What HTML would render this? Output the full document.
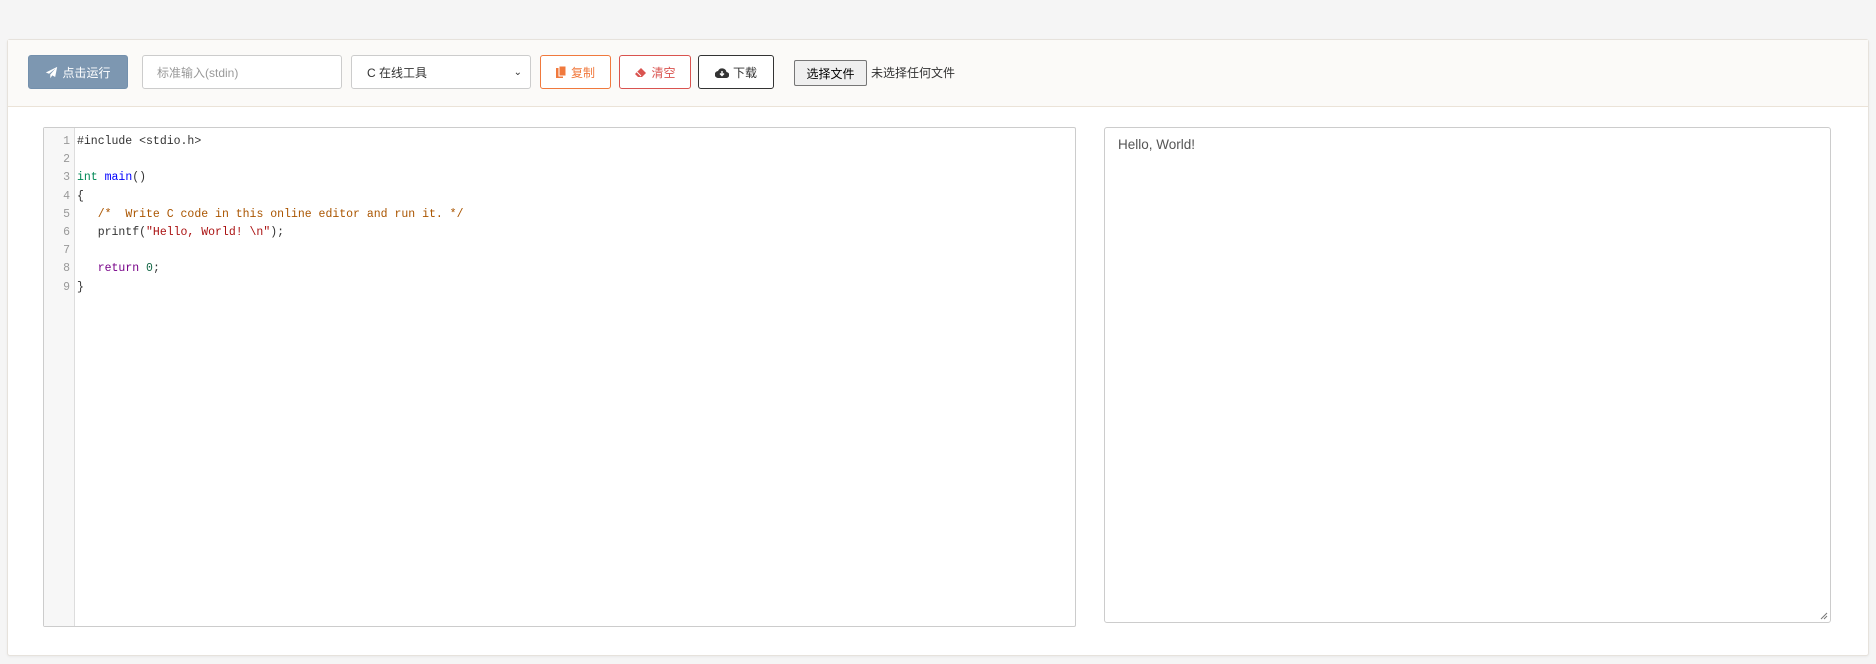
<!DOCTYPE html>
<html><head><meta charset="utf-8"><style>
body{margin:0;width:1876px;height:664px;background:#f5f5f5;font-family:"Liberation Sans","Noto Sans CJK SC",sans-serif;position:relative;overflow:hidden}
.panel{position:absolute;left:7px;top:39px;width:1860px;height:615px;background:#fff;border:1px solid #e6e2dc;border-radius:3px;box-shadow:0 1px 2px rgba(0,0,0,.05)}
.bar{position:absolute;left:0;top:0;width:1860px;height:66px;background:#fbfaf8;border-bottom:1px solid #ebe3d8}
.b{position:absolute;top:15px;height:34px;box-sizing:border-box;border-radius:3px;font-size:12px;display:flex;align-items:center;justify-content:center;gap:4px}
.code{position:absolute;left:35px;top:87px;width:1031px;height:498px;border:1px solid #ccc;border-radius:2px;background:#fff}
.gut{position:absolute;left:0;top:0;width:30px;height:100%;background:#f7f7f7;border-right:1px solid #ddd}
.ln,.cl{position:absolute;font-family:"Liberation Mono","Noto Serif CJK SC",monospace;font-size:11.5px;line-height:18.2px;top:5px;white-space:pre}
.ln{right:0;width:26px;text-align:right;color:#999;left:0}
.cl{left:33px;color:#333}
.out{position:absolute;left:1096px;top:87px;width:725px;height:494px;border:1px solid #ccc;border-radius:3px}
</style></head><body>
<div class="panel">
<div class="bar">
<div class="b" style="left:20px;width:100px;background:#7d97b1;color:#fff;border:1px solid #7390ad"><svg width="13" height="13" viewBox="0 0 16 16"><path d="M15 1L1 8l4 1.5L13 3 6.5 10.5V15l2.5-3.5 3.5 2z" fill="#fff"/></svg>点击运行</div>
<div class="b" style="left:134px;width:200px;border:1px solid #ccc;background:#fff;color:#999;justify-content:flex-start;padding-left:14px">标准输入(stdin)</div>
<div class="b" style="left:343px;width:180px;border:1px solid #ccc;background:#fff;color:#333;justify-content:space-between;padding:0 8px 0 15px">C 在线工具<span style="font-size:10px">&#8964;</span></div>
<div class="b" style="left:532px;width:71px;border:1px solid #f0793d;color:#f0793d;background:#fff"><svg width="11" height="12" viewBox="0 0 11 12"><rect x="0" y="2" width="7" height="10" fill="#f0793d"/><rect x="3" y="0" width="7" height="10" fill="#f0793d" stroke="#fff" stroke-width="1"/></svg>复制</div>
<div class="b" style="left:611px;width:72px;border:1px solid #d9534f;color:#d9534f;background:#fff"><svg width="13" height="11" viewBox="0 0 13 11"><path d="M1 7l6-6 5 5-4 4H4z" fill="#d9534f"/><path d="M3 5l4 4" stroke="#fff"/></svg>清空</div>
<div class="b" style="left:690px;width:76px;border:1px solid #333;color:#333;background:#fff"><svg width="14" height="11" viewBox="0 0 14 11"><path d="M3.5 11A3.5 3.5 0 013 4 4.5 4.5 0 0111.5 5 3 3 0 0111 11z" fill="#333"/><path d="M7 4v4M5 6.5L7 8.5 9 6.5" stroke="#fff" fill="none" stroke-width="1.4"/></svg>下载</div>
<div class="b" style="left:786px;top:20px;height:26px;width:73px;border:1px solid #767676;border-radius:2px;background:#efefef;color:#000;font-size:12px">选择文件</div>
<div style="position:absolute;left:863px;top:24px;font-size:12px;color:#333">未选择任何文件</div>
</div>
<div class="code"><div class="gut"></div>
<div class="ln">1
2
3
4
5
6
7
8
9</div>
<div class="cl">#include &lt;stdio.h&gt;

<span style="color:#008855">int</span> <span style="color:#0000ff">main</span>()
{
   <span style="color:#aa5500">/*  Write C code in this online editor and run it. */</span>
   printf(<span style="color:#aa1111">"Hello, World! \n"</span>);

   <span style="color:#770088">return</span> <span style="color:#116644">0</span>;
}</div></div>
<div class="out"><div style="position:absolute;left:13px;top:9px;font-size:13.5px;color:#555">Hello, World!</div>
<svg style="position:absolute;right:2px;bottom:2px" width="8" height="8"><path d="M7 1L1 7M7 4L4 7" stroke="#777"/></svg></div>
</div>
</body></html>
